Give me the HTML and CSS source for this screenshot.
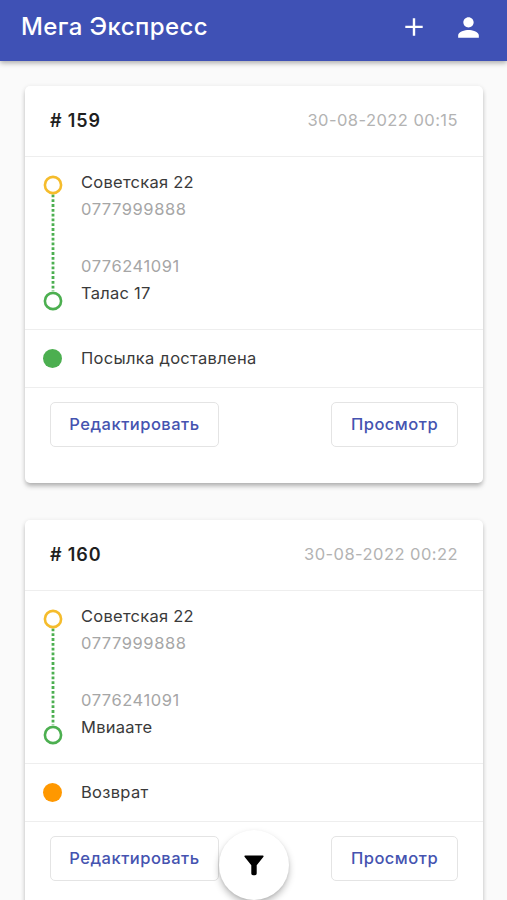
FILE: index.html
```html
<!DOCTYPE html>
<html lang="ru">
<head>
<meta charset="utf-8">
<meta name="viewport" content="width=device-width, initial-scale=1">
<title>Мега Экспресс</title>
<link rel="stylesheet" href="styles.css">
</head>
<body>
<header class="appbar">
  <h1 class="title">Мега Экспресс</h1>
  <button class="icon-button" aria-label="Добавить"><svg width="32" height="32" viewBox="0 0 32 32"><path d="M24.7 17.1h-7.5v7.6h-2.4v-7.6H7.3v-2.4h7.5V7.2h2.4v7.5h7.5z"/></svg></button>
  <button class="icon-button" aria-label="Профиль"><svg width="31" height="31" viewBox="0 0 24 24"><path d="M12 12c2.21 0 4-1.79 4-4s-1.79-4-4-4-4 1.79-4 4 1.79 4 4 4zm0 2c-2.67 0-8 1.34-8 4v2h16v-2c0-2.66-5.33-4-8-4z"/></svg></button>
</header>
<main class="list">
  <article class="card">
    <div class="card-head"><h2 class="number"># 159</h2><time class="date">30-08-2022 00:15</time></div>
    <div class="route">
      <svg class="track" width="20" height="136" viewBox="0 0 20 136"><path class="dots" d="M10 19.5V116"/><circle class="from" cx="10" cy="10" r="8.1"/><circle class="to" cx="10" cy="126" r="8.1"/></svg>
      <div class="stops">
        <span class="address">Советская 22</span><span class="phone">0777999888</span>
        <span class="phone to-phone">0776241091</span><span class="address">Талас 17</span>
      </div>
    </div>
    <div class="status"><span class="dot delivered"></span><span class="status-text">Посылка доставлена</span></div>
    <div class="actions"><button class="button edit">Редактировать</button><button class="button view">Просмотр</button></div>
  </article>
  <article class="card">
    <div class="card-head"><h2 class="number"># 160</h2><time class="date">30-08-2022 00:22</time></div>
    <div class="route">
      <svg class="track" width="20" height="136" viewBox="0 0 20 136"><path class="dots" d="M10 19.5V116"/><circle class="from" cx="10" cy="10" r="8.1"/><circle class="to" cx="10" cy="126" r="8.1"/></svg>
      <div class="stops">
        <span class="address">Советская 22</span><span class="phone">0777999888</span>
        <span class="phone to-phone">0776241091</span><span class="address">Мвиаате</span>
      </div>
    </div>
    <div class="status"><span class="dot returned"></span><span class="status-text">Возврат</span></div>
    <div class="actions"><button class="button edit">Редактировать</button><button class="button view">Просмотр</button></div>
  </article>
</main>
<button class="fab" aria-label="Фильтр"><svg width="20" height="21" viewBox="0 0 20 21"><path d="M1.2 0.5H18.8Q20.2 0.8 19.3 2L12.7 10.2V18.5Q12.7 20.3 11 20.3H9Q7.3 20.3 7.3 18.5V10.2L.7 2Q-.2 .8 1.2 .5Z"/></svg></button>
</body>
</html>
```
FILE: styles.css
```css
* { box-sizing: border-box; }
html, body { height: 100%; }
body {
  margin: 0;
  overflow: hidden;
  background: #fafafa;
  color: #3a3a3a;
  font-family: Inter, "Liberation Sans", sans-serif;
  font-size: 16.5px;
}
button { font-family: inherit; cursor: pointer; }
h1, h2 { margin: 0; }
.appbar {
  position: relative;
  display: flex;
  align-items: center;
  gap: 23px;
  height: 61px;
  padding: 0 23px 7px 21px;
  background: #3f51b5;
  box-shadow: 0 2px 5px rgba(0, 0, 0, .32);
}
.title { flex: 1; color: #fff; font-size: 24px; line-height: 30px; font-weight: 500; letter-spacing: .4px; white-space: nowrap; }
.icon-button { display: flex; padding: 0; border: 0; background: none; fill: #fff; }
.list { display: flex; flex-direction: column; gap: 37px; padding: 25px 24px 0 25px; }
.card {
  height: 397px;
  background: #fff;
  border-radius: 5px;
  box-shadow: 0 4px 5px -1px rgba(0, 0, 0, .25), 0 1px 5px rgba(0, 0, 0, .11);
}
.card-head { display: flex; justify-content: space-between; align-items: center; height: 71px; padding: 0 25px 2px; border-bottom: 1px solid #eee; }
.number { color: #1f1f1f; font-size: 18px; font-weight: 600; letter-spacing: .85px; }
.date { color: #b3b3b3; letter-spacing: .45px; }
.route { display: flex; gap: 18px; height: 173px; padding: 12px 18px 0; border-bottom: 1px solid #eee; }
.track { display: block; margin-top: 6px; flex: none; fill: none; stroke-width: 2.6; }
.from { stroke: #f5bc2c; }
.to { stroke: #4caf50; }
.dots { stroke: #4caf50; stroke-width: 2.8; stroke-dasharray: 2.8 2; }
.stops { display: flex; flex-direction: column; line-height: 27px; letter-spacing: .25px; white-space: nowrap; }
.phone { color: #a6a6a6; letter-spacing: .55px; }
.to-phone { margin-top: 30px; }
.status { display: flex; align-items: center; gap: 19px; height: 58px; padding: 0 18px; border-bottom: 1px solid #eee; letter-spacing: .3px; }
.status-text { padding-bottom: 2px; }
.dot { width: 19px; height: 19px; border-radius: 50%; }
.delivered { background: #4caf50; }
.returned { background: #ff9800; }
.actions { display: flex; justify-content: space-between; padding: 14px 25px 0; }
.button { height: 45px; padding: 0 0 2px; border: 1.5px solid #e4e4e4; border-radius: 5px; background: #fff; color: #4553b0; font-size: 16.5px; font-weight: 500; letter-spacing: .5px; }
.edit { width: 169px; }
.view { width: 127px; }
.fab {
  position: fixed;
  left: 219px;
  top: 830px;
  display: flex;
  align-items: center;
  justify-content: center;
  width: 70px;
  height: 70px;
  padding: 0;
  border: 0;
  border-radius: 50%;
  background: #fff;
  fill: #000;
  box-shadow: 0 4px 7px rgba(0, 0, 0, .26), 0 1px 3px rgba(0, 0, 0, .08);
}
```
